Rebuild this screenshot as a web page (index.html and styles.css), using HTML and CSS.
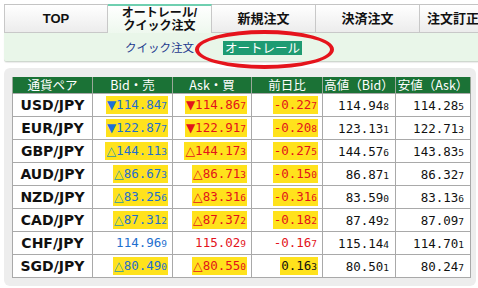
FILE: index.html
```html
<!DOCTYPE html>
<html lang="ja">
<head>
<meta charset="utf-8">
<link rel="stylesheet" href="styles.css">
</head>
<body>
<div class="page">
  <nav class="tabs">
    <div class="tab">TOP</div>
    <div class="tab active">オートレール/<br>クイック注文</div>
    <div class="tab menu">新規注文</div>
    <div class="tab menu">決済注文</div>
    <div class="tab menu last">注文訂正</div>
  </nav>
  <div class="subbar">
    <span class="sublink">クイック注文</span>
    <span class="badge">オートレール</span>
    <span class="ring"></span>
  </div>
  <div class="panel">
    <table class="rates">
      <colgroup>
        <col class="c1"><col class="c2"><col class="c3"><col class="c4"><col class="c5"><col class="c6">
      </colgroup>
      <thead>
        <tr><th>通貨ペア</th><th>Bid・売</th><th>Ask・買</th><th>前日比</th><th>高値（Bid）</th><th>安値（Ask）</th></tr>
      </thead>
      <tbody>
        <tr><td class="pair">USD/JPY</td>
          <td class="num"><span class="hl bid"><i class="dn">▼</i>114.84<small>7</small></span></td>
          <td class="num"><span class="hl ask"><i class="dnr">▼</i>114.86<small>7</small></span></td>
          <td class="num"><span class="hl ask">-0.22<small>7</small></span></td>
          <td class="num plain">114.94<small>8</small></td>
          <td class="num plain">114.28<small>5</small></td></tr>
        <tr><td class="pair">EUR/JPY</td>
          <td class="num"><span class="hl bid"><i class="dn">▼</i>122.87<small>7</small></span></td>
          <td class="num"><span class="hl ask"><i class="dnr">▼</i>122.91<small>7</small></span></td>
          <td class="num"><span class="hl ask">-0.20<small>8</small></span></td>
          <td class="num plain">123.13<small>1</small></td>
          <td class="num plain">122.71<small>3</small></td></tr>
        <tr><td class="pair">GBP/JPY</td>
          <td class="num"><span class="hl bid"><i class="up">△</i>144.11<small>3</small></span></td>
          <td class="num"><span class="hl ask"><i>△</i>144.17<small>3</small></span></td>
          <td class="num"><span class="hl ask">-0.27<small>5</small></span></td>
          <td class="num plain">144.57<small>6</small></td>
          <td class="num plain">143.83<small>5</small></td></tr>
        <tr><td class="pair">AUD/JPY</td>
          <td class="num"><span class="hl bid"><i class="up">△</i>86.67<small>3</small></span></td>
          <td class="num"><span class="hl ask"><i>△</i>86.71<small>3</small></span></td>
          <td class="num"><span class="hl ask">-0.15<small>0</small></span></td>
          <td class="num plain">86.87<small>1</small></td>
          <td class="num plain">86.32<small>7</small></td></tr>
        <tr><td class="pair">NZD/JPY</td>
          <td class="num"><span class="hl bid"><i class="up">△</i>83.25<small>6</small></span></td>
          <td class="num"><span class="hl ask"><i>△</i>83.31<small>6</small></span></td>
          <td class="num"><span class="hl ask">-0.31<small>6</small></span></td>
          <td class="num plain">83.59<small>0</small></td>
          <td class="num plain">83.13<small>6</small></td></tr>
        <tr><td class="pair">CAD/JPY</td>
          <td class="num"><span class="hl bid"><i class="up">△</i>87.31<small>2</small></span></td>
          <td class="num"><span class="hl ask"><i>△</i>87.37<small>2</small></span></td>
          <td class="num"><span class="hl ask">-0.18<small>2</small></span></td>
          <td class="num plain">87.49<small>2</small></td>
          <td class="num plain">87.09<small>7</small></td></tr>
        <tr><td class="pair">CHF/JPY</td>
          <td class="num"><span class="nohl bid">114.96<small>9</small></span></td>
          <td class="num"><span class="nohl ask">115.02<small>9</small></span></td>
          <td class="num"><span class="nohl ask">-0.16<small>7</small></span></td>
          <td class="num plain">115.14<small>4</small></td>
          <td class="num plain">114.70<small>1</small></td></tr>
        <tr><td class="pair">SGD/JPY</td>
          <td class="num"><span class="hl bid"><i class="up">△</i>80.49<small>0</small></span></td>
          <td class="num"><span class="hl ask"><i>△</i>80.55<small>0</small></span></td>
          <td class="num"><span class="hl black">0.16<small>3</small></span></td>
          <td class="num plain">80.50<small>1</small></td>
          <td class="num plain">80.24<small>7</small></td></tr>
      </tbody>
    </table>
  </div>
</div>
</body>
</html>
```
FILE: styles.css
```css
html, body {
  margin: 0;
  padding: 0;
  background: #ffffff;
}
body {
  font-family: "DejaVu Sans", "Noto Sans CJK JP", sans-serif;
  color: #111;
  width: 478px;
  height: 288px;
  overflow: hidden;
}
.page {
  padding-top: 4px;
}
.tabs {
  display: flex;
  margin-left: 4px;
  height: 29px;
  border-top: 1px solid #c4c4c4;
  box-sizing: border-box;
}
.tab {
  position: relative;
  flex: 0 0 104px;
  box-sizing: border-box;
  border-right: 1px solid #c8c8c8;
  border-bottom: 1px solid #c8c8c8;
  background: linear-gradient(#ffffff, #ececec);
  display: flex;
  align-items: center;
  justify-content: center;
  font-family: "Liberation Sans", "Noto Sans CJK JP", sans-serif;
  font-weight: bold;
  font-size: 13px;
  line-height: 13px;
  text-align: center;
  color: #111;
}
.tab:first-child {
  border-left: 1px solid #c8c8c8;
}
.tab.active {
  background: linear-gradient(#ffffff, #eef8ee);
  border-top: 2px solid #6fcfb0;
  margin-top: -1px;
  border-bottom: none;
  font-size: 12px;
  line-height: 13px;
  padding-top: 1px;
}
.tab.last {
  flex: 0 0 60px;
  justify-content: flex-start;
  padding-left: 7px;
  border-right: none;
}
.tab.menu::after {
  content: "";
  position: absolute;
  left: 50%;
  bottom: -4px;
  margin-left: -3px;
  border-left: 3px solid transparent;
  border-right: 3px solid transparent;
  border-top: 3px solid #222;
}
.tab.last::after {
  left: 52px;
}
.subbar {
  position: relative;
  margin-left: 4px;
  height: 28px;
  background: #e9f6e9;
  border-bottom: 1px solid #cfd8cf;
  border-radius: 0 0 0 3px;
  box-shadow: 0 1px 1px rgba(0,0,0,0.08);
  display: flex;
  align-items: center;
  font-family: "Noto Sans CJK JP", sans-serif;
  font-size: 11.5px;
}
.sublink {
  margin-left: 121px;
  color: #1f3a8e;
}
.badge {
  margin-left: 29px;
  background: #1e9b72;
  color: #fff;
  font-size: 12.5px;
  line-height: 14px;
  padding: 0 2px;
  margin-top: 2px;
}
.ring {
  position: absolute;
  left: 191px;
  top: -3px;
  width: 131px;
  height: 31px;
  border: 4px solid #e5141c;
  border-radius: 50%;
  z-index: 2;
}
.panel {
  margin: 6px 2px 0 4px;
  background: #ededed;
  border-radius: 6px;
  padding: 9px 6px 8px 8px;
}
.rates {
  border-collapse: collapse;
  width: 458px;
  table-layout: fixed;
  background: #fff;
}
.c1 { width: 80px; }
.c2 { width: 80px; }
.c3 { width: 79px; }
.c4 { width: 71px; }
.c5 { width: 73px; }
.c6 { width: 75px; }
.rates th {
  background: #1b7236;
  color: #fff;
  font-family: "Noto Sans CJK JP", sans-serif;
  font-weight: normal;
  font-size: 12.5px;
  height: 16px;
  line-height: 14px;
  padding: 0;
  border: 1px solid #9aa89a;
  border-top: none;
  border-bottom: none;
}
.rates td {
  border: 1px solid #a9a9a9;
  height: 22px;
  padding: 0;
}
.pair {
  text-align: center;
  font-family: "DejaVu Sans", sans-serif;
  font-weight: bold;
  font-size: 14px;
  color: #111;
}
.num {
  text-align: right;
  padding-right: 4px !important;
  font-family: "DejaVu Sans Mono", monospace;
  font-size: 12.5px;
}
.num small {
  font-size: 9.5px;
}
.plain {
  color: #111;
  padding-right: 6px !important;
}
.hl {
  display: inline-block;
  background: #ffe21c;
  padding: 2px 1px 1px 1px;
  line-height: 14px;
}
.nohl {
  display: inline-block;
  padding: 2px 1px 1px 1px;
  line-height: 14px;
}
.bid { color: #1f6fcf; }
.ask { color: #e3131b; }
.black { color: #111; }
.hl i {
  font-style: normal;
  font-family: "DejaVu Sans", sans-serif;
}
.hl i.dn { color: #1c6fd8; font-size: 12px; }
.hl i.dnr { color: #e3131b; font-size: 12px; }
.hl i.up { color: #2a98a8; }
```
